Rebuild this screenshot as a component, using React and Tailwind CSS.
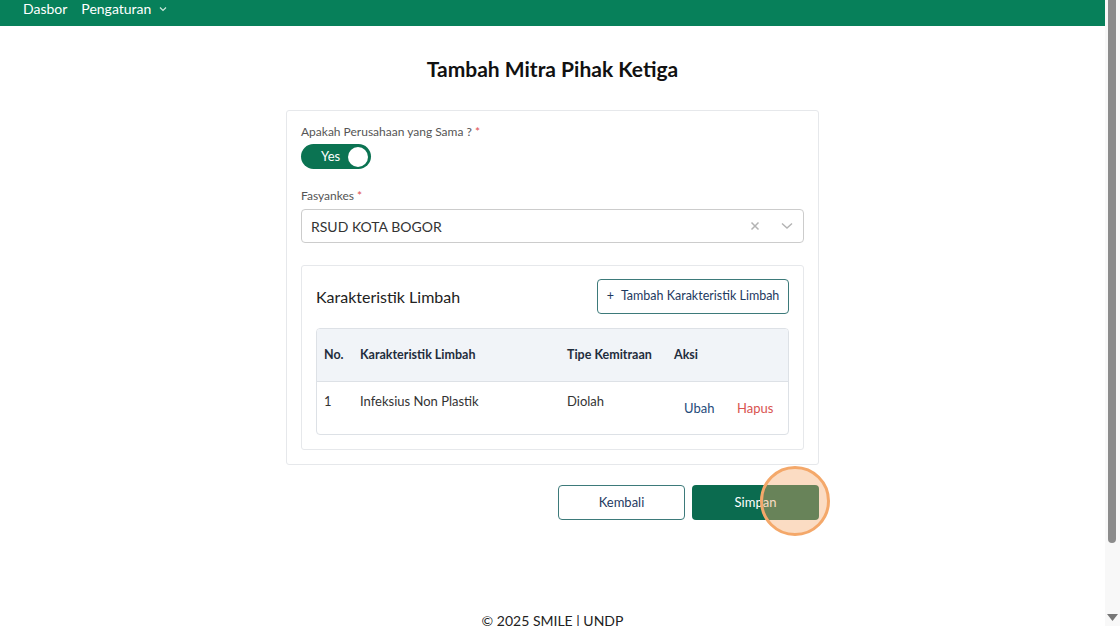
import React from "react";

export default function App() {
  return (
    <div className="flex h-[626px] w-[1120px] overflow-hidden bg-white" style={{ fontFamily: "Lato, 'Noto Sans', sans-serif" }}>
      <div className="flex w-[1105px] flex-col">
        <div className="flex h-[26px] items-start bg-[#07805a] pl-[23px] text-[14px] leading-[18px] text-white">
          <span>Dasbor</span>
          <span className="ml-[14px]">Pengaturan</span>
          <svg className="ml-[8px] mt-[6px]" width="8" height="6" viewBox="0 0 8 6" fill="none">
            <path d="M1 1.5 L4 4.5 L7 1.5" stroke="#cfe8dd" strokeWidth="1.2" />
          </svg>
        </div>

        <h1 className="mt-[29px] text-center text-[21px] font-bold leading-[28px] text-[#111]">Tambah Mitra Pihak Ketiga</h1>

        <div className="mx-auto mt-[27px] flex w-[533px] flex-col rounded-[3px] border border-[#e6e8eb] px-[14px] pb-[14px] pt-[13px]">
          <div className="text-[12px] leading-[16px] text-[#555]">
            Apakah Perusahaan yang Sama ? <span className="text-[#e05050]">*</span>
          </div>
          <div className="mt-[4px] flex h-[25px] w-[70px] items-center justify-between rounded-full bg-[#0b7352] pl-[20px] pr-[3px]">
            <span className="text-[13px] text-white">Yes</span>
            <span className="h-[20px] w-[20px] rounded-full bg-white" />
          </div>

          <div className="mt-[19px] text-[12px] leading-[16px] text-[#555]">
            Fasyankes <span className="text-[#e05050]">*</span>
          </div>
          <div className="mt-[5px] flex h-[34px] items-center rounded-[4px] border border-[#cccccc] pl-[9px] pr-[10px]">
            <span className="flex-1 text-[14px] text-[#333]">RSUD KOTA BOGOR</span>
            <svg width="10" height="10" viewBox="0 0 10 10" className="mr-[21px]">
              <path d="M1.5 1.5 L8.5 8.5 M8.5 1.5 L1.5 8.5" stroke="#b3b3b3" strokeWidth="1.5" />
            </svg>
            <svg width="12" height="8" viewBox="0 0 12 8">
              <path d="M1 1.5 L6 6 L11 1.5" stroke="#b3b3b3" strokeWidth="1.4" fill="none" />
            </svg>
          </div>

          <div className="mt-[22px] flex flex-col rounded-[3px] border border-[#e6e8eb] px-[14px] pb-[14px] pt-[13px]">
            <div className="flex items-center justify-between">
              <span className="text-[16px] text-[#222]">Karakteristik Limbah</span>
              <button className="flex h-[35px] w-[192px] items-center justify-center rounded-[4px] border border-[#3d7a7a] text-[12.5px] text-[#1e3a5f]">
                <span className="mr-[7px]">+</span>Tambah Karakteristik Limbah
              </button>
            </div>
            <div className="mt-[14px] overflow-hidden rounded-[4px] border border-[#dde1e6]">
              <div className="flex h-[53px] items-center border-b border-[#dde1e6] bg-[#f1f4f8] text-[12.5px] font-bold text-[#1f2d3d]">
                <span className="w-[43px] pl-[7px]">No.</span>
                <span className="w-[207px]">Karakteristik Limbah</span>
                <span className="w-[107px]">Tipe Kemitraan</span>
                <span>Aksi</span>
              </div>
              <div className="flex h-[52px] items-start text-[13px] text-[#333]">
                <span className="mt-[10px] w-[43px] pl-[7px]">1</span>
                <span className="mt-[10px] w-[207px]">Infeksius Non Plastik</span>
                <span className="mt-[10px] w-[117px]">Diolah</span>
                <span className="mt-[17px] w-[53px] text-[#1e4a7a]">Ubah</span>
                <span className="mt-[17px] text-[#d9534f]">Hapus</span>
              </div>
            </div>
          </div>
        </div>

        <div className="mx-auto mt-[20px] flex w-[533px] justify-end gap-[7px]">
          <button className="h-[35px] w-[127px] rounded-[4px] border border-[#3d7a7a] text-[13px] text-[#1e3a5f]">Kembali</button>
          <div className="relative">
            <button className="h-[35px] w-[127px] rounded-[4px] bg-[#0b6b4f] text-[13px] text-white">Simpan</button>
            <div className="absolute left-[68px] top-[-19px] h-[70px] w-[70px] rounded-full border-[3px] border-[#f4a86a] bg-[#f4a86a]/40" />
          </div>
        </div>

        <div className="-mb-[4px] mt-auto text-center text-[14px] leading-[18px] text-[#222]">© 2025 SMILE | UNDP</div>
      </div>

      <div className="relative w-[15px] bg-[#f8f8f8]">
        <div className="ml-[3px] h-[543px] w-[8px] rounded-b-full bg-[#8c8c8c]" />
        <svg className="absolute left-[2px] top-[614px]" width="11" height="7" viewBox="0 0 11 7">
          <path d="M0 0 L11 0 L5.5 7 Z" fill="#777" />
        </svg>
      </div>
    </div>
  );
}
